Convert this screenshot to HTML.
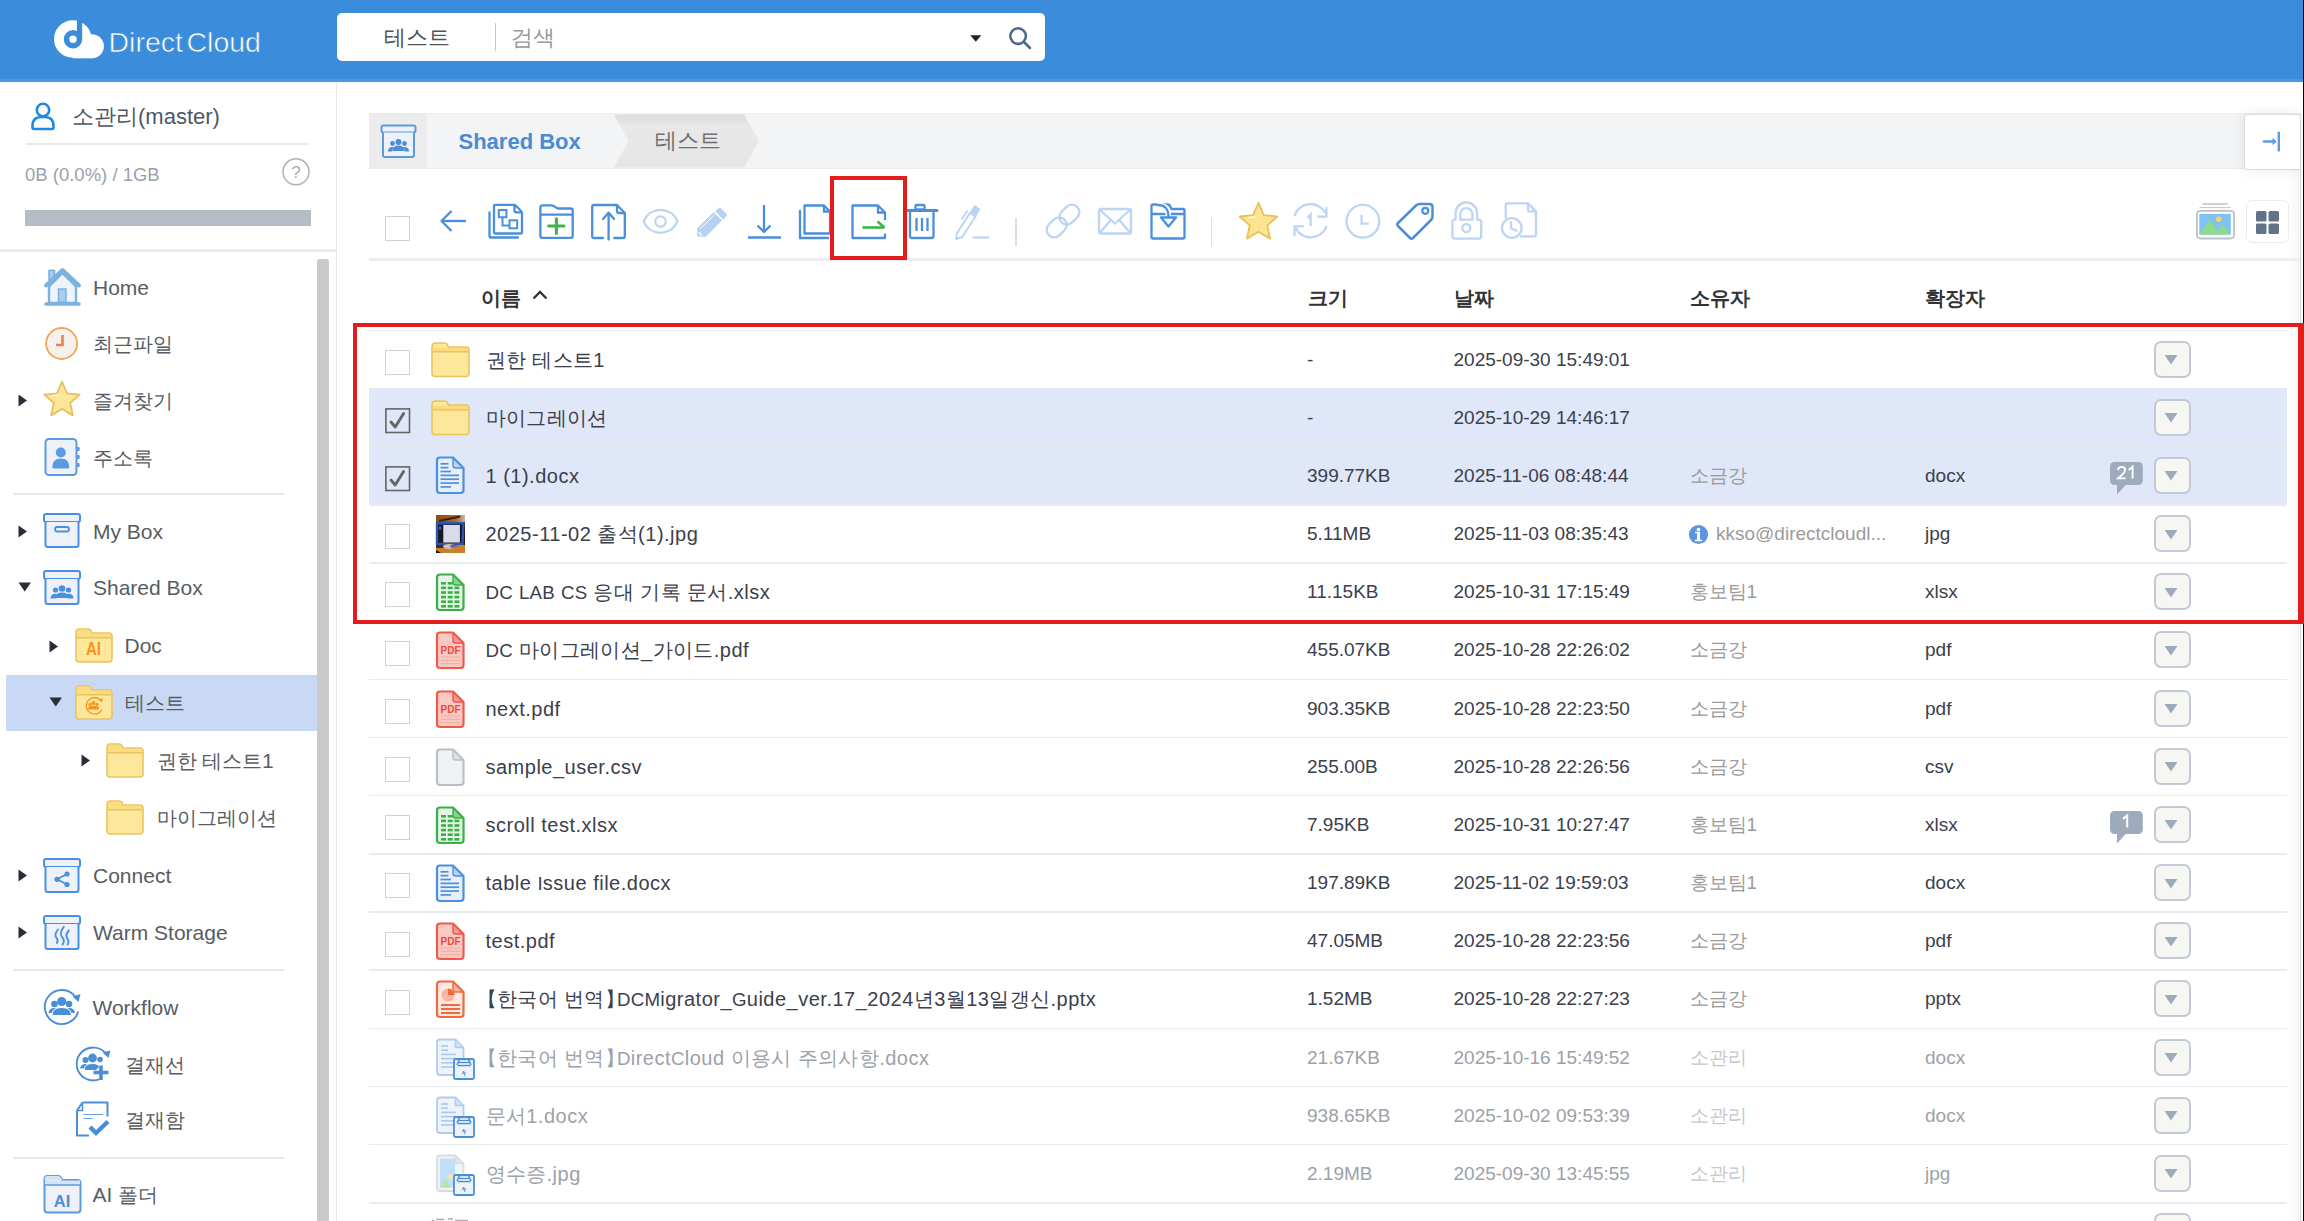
<!DOCTYPE html><html><head><meta charset="utf-8"><style>
html,body{margin:0;padding:0;}
body{width:2304px;height:1221px;overflow:hidden;position:relative;background:#fff;font-family:"Liberation Sans",sans-serif;}
.t{position:absolute;white-space:nowrap;}
svg{overflow:visible;}
.k{font-size:19.5px;letter-spacing:0.35px;}
.u{font-size:18.7px;letter-spacing:0.2px;}
.k2{font-size:20px;}
</style></head><body>
<div style="position:absolute;left:0px;top:0px;width:2304px;height:79px;background:#3b8ddb"></div>
<div style="position:absolute;left:0px;top:79px;width:2304px;height:3px;background:#4b98e0"></div>
<svg style="position:absolute;left:50px;top:14px;" width="60" height="50" viewBox="0 0 60 50" fill="none">
<circle cx="22.8" cy="25" r="18.8" fill="#fff"/>
<circle cx="41.9" cy="32.3" r="12" fill="#fff"/>
<rect x="22.8" y="25" width="19.1" height="19.3" fill="#fff"/>
<circle cx="23" cy="25.2" r="6.45" stroke="#3b8ddb" stroke-width="5.5"/>
<rect x="26.9" y="0" width="5.3" height="25.2" fill="#3b8ddb"/>
</svg>
<div class="t" style="left:108.5px;top:22.50px;font-size:28.5px;line-height:39px;color:#fff;font-weight:normal;-webkit-text-stroke:0.6px #3b8ddb;">Direct</div>
<div class="t" style="left:186.5px;top:22.50px;font-size:28.5px;line-height:39px;color:#fff;font-weight:normal;-webkit-text-stroke:0.6px #3b8ddb;">Cloud</div>
<div style="position:absolute;left:337px;top:13px;width:708px;height:47.5px;background:#fff;border-radius:5px"></div>
<div class="t" style="left:384px;top:22.50px;font-size:22px;line-height:30px;color:#555;font-weight:normal;">테스트</div>
<div style="position:absolute;left:494.5px;top:23px;width:1.5px;height:28px;background:#c8c8c8"></div>
<div class="t" style="left:511px;top:22.50px;font-size:22px;line-height:30px;color:#999;font-weight:normal;">검색</div>
<svg style="position:absolute;left:968px;top:33px;" width="16" height="10" viewBox="0 0 16 10" fill="none"><path d="M2.3 2.2 H13.3 L7.8 8.7 Z" fill="#222"/></svg>
<svg style="position:absolute;left:1005px;top:23px;" width="30" height="30" viewBox="0 0 30 30" fill="none"><circle cx="13.1" cy="13.1" r="7.8" stroke="#4d6a8c" stroke-width="2.6"/><path d="M19 19 L25 25" stroke="#4d6a8c" stroke-width="2.6" stroke-linecap="round"/></svg>
<div style="position:absolute;left:336px;top:82px;width:1px;height:1139px;background:#e6e8eb"></div>
<svg style="position:absolute;left:28px;top:100px;" width="30" height="34" viewBox="0 0 30 34" fill="none"><circle cx="15" cy="10" r="6.2" stroke="#1e88e5" stroke-width="2.6"/><path d="M4.5 26 Q4.5 17 13 17 H17 Q25.5 17 25.5 26 V27.5 Q25.5 29 24 29 H6 Q4.5 29 4.5 27.5 Z" stroke="#1e88e5" stroke-width="2.6" stroke-linejoin="round"/></svg>
<div class="t" style="left:72px;top:101.50px;font-size:22px;line-height:30px;color:#4a5866;font-weight:normal;">소관리(master)</div>
<div style="position:absolute;left:26px;top:143px;width:283px;height:2px;background:#e9e9e9"></div>
<div class="t" style="left:25px;top:161.50px;font-size:18.5px;line-height:25px;color:#9aa1aa;font-weight:normal;">0B (0.0%) / 1GB</div>
<svg style="position:absolute;left:282px;top:158px;" width="29" height="29" viewBox="0 0 29 29" fill="none"><circle cx="14" cy="13.8" r="13" stroke="#b0b0b0" stroke-width="1.5"/><text x="14" y="20" text-anchor="middle" font-family="Liberation Sans" font-size="17" fill="#aaa">?</text></svg>
<div style="position:absolute;left:24.5px;top:210px;width:286px;height:15.5px;background:#b4bcc5"></div>
<div style="position:absolute;left:0px;top:249px;width:336px;height:3px;background:#eaecef"></div>
<div style="position:absolute;left:317.3px;top:258.8px;width:11.5px;height:963px;background:#cacaca;border-radius:3px 3px 0 0"></div>
<svg style="position:absolute;left:43px;top:267px;" width="40" height="40" viewBox="0 0 40 40" fill="none"><path d="M7.5 3.5 H11.5 V10" fill="#a8cdf0" stroke="#7ab3e0" stroke-width="1.6"/><rect x="6" y="3.5" width="5" height="9" fill="#a8cdf0" stroke="#7ab3e0" stroke-width="1.6"/>
<path d="M6 19.5 L19.5 6 L33 19.5 V36 H6 Z" fill="#eef4fa" stroke="#7ab3e0" stroke-width="2.4" stroke-linejoin="round"/>
<path d="M3 18.5 L19.5 3 L36 18.5" stroke="#7ab3e0" stroke-width="4" stroke-linecap="round" stroke-linejoin="round"/>
<rect x="15.5" y="22" width="7.5" height="13" fill="#a8cdf0" stroke="#7ab3e0" stroke-width="1.5"/>
<path d="M3 37 H36" stroke="#7ab3e0" stroke-width="3.6" stroke-linecap="round"/></svg>
<div class="t" style="left:93px;top:272.80px;font-size:21px;line-height:29px;color:#585c62;font-weight:normal;">Home</div>
<svg style="position:absolute;left:45px;top:327px;" width="34" height="34" viewBox="0 0 34 34" fill="none"><circle cx="16.6" cy="16.5" r="15.5" fill="#f7f1ee" stroke="#f1a85c" stroke-width="1.8"/><path d="M17.5 8 V18 H11" stroke="#e8805c" stroke-width="2.6"/></svg>
<div class="t" style="left:93px;top:329.00px;font-size:21px;line-height:29px;color:#585c62;font-weight:normal;"><span class="k2">최근파일</span></div>
<svg style="position:absolute;left:18px;top:393.5px;" width="10" height="13" viewBox="0 0 10 13" fill="none"><path d="M0.5 0.5 L9 6.5 L0.5 12.5 Z" fill="#2b2e3a"/></svg>
<svg style="position:absolute;left:43px;top:380px;" width="38" height="38" viewBox="0 0 38 38" fill="none"><path d="M19.00 1.70 L24.05 13.34 L36.69 14.55 L27.18 22.96 L29.93 35.35 L19.00 28.90 L8.07 35.35 L10.82 22.96 L1.31 14.55 L13.95 13.34 Z" fill="#fde69a" stroke="#e8c062" stroke-width="1.8" stroke-linejoin="round"/><path d="M10 15.5 L16 15" stroke="#fff6d0" stroke-width="1.2" stroke-linecap="round"/></svg>
<div class="t" style="left:93px;top:385.50px;font-size:21px;line-height:29px;color:#585c62;font-weight:normal;"><span class="k2">즐겨찾기</span></div>
<svg style="position:absolute;left:44px;top:438px;" width="38" height="39" viewBox="0 0 38 39" fill="none"><rect x="1.5" y="1" width="31" height="36" rx="3.5" fill="#eef2f8" stroke="#5c9ae0" stroke-width="2"/>
<g fill="#5c9ae0"><circle cx="16.8" cy="14.5" r="5"/><path d="M8.3 29 Q8.3 20.5 16.8 20.5 Q25.3 20.5 25.3 29 Q25.3 30.5 23.5 30.5 H10.1 Q8.3 30.5 8.3 29 Z"/>
<rect x="32.5" y="9" width="3.2" height="4" rx="1"/><rect x="32.5" y="17" width="3.2" height="4" rx="1"/><rect x="32.5" y="25" width="3.2" height="4" rx="1"/></g></svg>
<div class="t" style="left:93px;top:442.50px;font-size:21px;line-height:29px;color:#585c62;font-weight:normal;"><span class="k2">주소록</span></div>
<div style="position:absolute;left:13px;top:493px;width:271px;height:2px;background:#e2e8ef"></div>
<svg style="position:absolute;left:18px;top:524.5px;" width="10" height="13" viewBox="0 0 10 13" fill="none"><path d="M0.5 0.5 L9 6.5 L0.5 12.5 Z" fill="#2b2e3a"/></svg>
<svg style="position:absolute;left:43px;top:513px;" width="38" height="35" viewBox="0 0 38 35" fill="none"><rect x="1" y="1" width="36" height="8" rx="2" fill="#eef2f8" stroke="#4a90e2" stroke-width="2"/>
<path d="M2.5 9 V32 Q2.5 34 4.5 34 H33.5 Q35.5 34 35.5 32 V9" fill="#eef2f8" stroke="#4a90e2" stroke-width="2"/><rect x="12" y="14" width="14" height="4.5" rx="2.2" stroke="#4a90e2" stroke-width="1.8"/></svg>
<div class="t" style="left:93px;top:516.50px;font-size:21px;line-height:29px;color:#585c62;font-weight:normal;">My Box</div>
<svg style="position:absolute;left:18px;top:582px;" width="14" height="10" viewBox="0 0 14 10" fill="none"><path d="M0.5 0.5 H13 L6.75 9.5 Z" fill="#2b2e3a"/></svg>
<svg style="position:absolute;left:43px;top:570px;" width="38" height="35" viewBox="0 0 38 35" fill="none"><rect x="1" y="1" width="36" height="8" rx="2" fill="#eef2f8" stroke="#4a90e2" stroke-width="2"/>
<path d="M2.5 9 V32 Q2.5 34 4.5 34 H33.5 Q35.5 34 35.5 32 V9" fill="#eef2f8" stroke="#4a90e2" stroke-width="2"/><g fill="#4a90e2"><circle cx="19" cy="18.5" r="3.3"/><path d="M12.5 28 Q12.5 22.5 19 22.5 Q25.5 22.5 25.5 28 Z"/><circle cx="12.5" cy="20" r="2.6"/><path d="M7.5 28.5 Q7.5 23.8 12.5 23.8 Q14 23.8 14.5 24.5 Q12.8 26 12.8 28.5 Z"/><circle cx="25.5" cy="20" r="2.6"/><path d="M30.5 28.5 Q30.5 23.8 25.5 23.8 Q24 23.8 23.5 24.5 Q25.2 26 25.2 28.5 Z"/></g></svg>
<div class="t" style="left:93px;top:573.00px;font-size:21px;line-height:29px;color:#585c62;font-weight:normal;">Shared Box</div>
<svg style="position:absolute;left:49px;top:639.5px;" width="10" height="13" viewBox="0 0 10 13" fill="none"><path d="M0.5 0.5 L9 6.5 L0.5 12.5 Z" fill="#2b2e3a"/></svg>
<svg style="position:absolute;left:75px;top:628px;" width="38" height="35" viewBox="0 0 38 35" fill="none"><path d="M1 5 Q1 1 4 1 H13 Q16 1 16.5 4 L17 5 H34 Q37 5 37 8 V31 Q37 34 34 34 H4 Q1 34 1 31 Z" fill="#fde79a" stroke="#e8c462" stroke-width="1.6"/>
<path d="M1.8 5 Q1.8 1.8 4 1.8 H13 Q15.5 1.8 16 4.5 L16.5 5.8 H34 Q36.2 5.8 36.2 8 V9.2 H1.8 Z" fill="#fbdc7e"/>
<path d="M1.5 9.8 H36.5" stroke="#e8c462" stroke-width="1.6"/><text x="11" y="27.3" font-family="Liberation Sans" font-weight="bold" font-size="18.5" fill="#f7931e" textLength="15" lengthAdjust="spacingAndGlyphs">AI</text></svg>
<div class="t" style="left:124.5px;top:630.50px;font-size:21px;line-height:29px;color:#585c62;font-weight:normal;">Doc</div>
<div style="position:absolute;left:5.5px;top:675.3px;width:311.5px;height:55.8px;background:#c9d9f5"></div>
<svg style="position:absolute;left:49px;top:696.5px;" width="14" height="10" viewBox="0 0 14 10" fill="none"><path d="M0.5 0.5 H13 L6.75 9.5 Z" fill="#2b2e3a"/></svg>
<svg style="position:absolute;left:75px;top:685px;" width="38" height="35" viewBox="0 0 38 35" fill="none"><path d="M1 5 Q1 1 4 1 H13 Q16 1 16.5 4 L17 5 H34 Q37 5 37 8 V31 Q37 34 34 34 H4 Q1 34 1 31 Z" fill="#fde79a" stroke="#e8c462" stroke-width="1.6"/>
<path d="M1.8 5 Q1.8 1.8 4 1.8 H13 Q15.5 1.8 16 4.5 L16.5 5.8 H34 Q36.2 5.8 36.2 8 V9.2 H1.8 Z" fill="#fbdc7e"/>
<path d="M1.5 9.8 H36.5" stroke="#e8c462" stroke-width="1.6"/><path d="M25.5 15 A8.3 8.3 0 1 0 27 24.5" stroke="#f7931e" stroke-width="1.3"/><path d="M23.5 14.5 L27.8 13.2 L26.8 17.5 Z" fill="#f7931e"/><g fill="#f7931e"><circle cx="18.5" cy="18" r="2.1"/><circle cx="15" cy="19.3" r="1.6"/><circle cx="22" cy="19.3" r="1.6"/><path d="M13 24.5 Q13 21 15.5 21 H21.5 Q24 21 24 24.5 Z"/></g></svg>
<div class="t" style="left:125px;top:688.00px;font-size:21px;line-height:29px;color:#585c62;font-weight:normal;"><span class="k2">테스트</span></div>
<svg style="position:absolute;left:81px;top:754.0px;" width="10" height="13" viewBox="0 0 10 13" fill="none"><path d="M0.5 0.5 L9 6.5 L0.5 12.5 Z" fill="#2b2e3a"/></svg>
<svg style="position:absolute;left:106px;top:742.5px;" width="38" height="35" viewBox="0 0 38 35" fill="none"><path d="M1 5 Q1 1 4 1 H13 Q16 1 16.5 4 L17 5 H34 Q37 5 37 8 V31 Q37 34 34 34 H4 Q1 34 1 31 Z" fill="#fde79a" stroke="#e8c462" stroke-width="1.6"/>
<path d="M1.8 5 Q1.8 1.8 4 1.8 H13 Q15.5 1.8 16 4.5 L16.5 5.8 H34 Q36.2 5.8 36.2 8 V9.2 H1.8 Z" fill="#fbdc7e"/>
<path d="M1.5 9.8 H36.5" stroke="#e8c462" stroke-width="1.6"/></svg>
<div class="t" style="left:156.5px;top:745.50px;font-size:21px;line-height:29px;color:#585c62;font-weight:normal;"><span class="k2">권한 테스트</span>1</div>
<svg style="position:absolute;left:106px;top:800px;" width="38" height="35" viewBox="0 0 38 35" fill="none"><path d="M1 5 Q1 1 4 1 H13 Q16 1 16.5 4 L17 5 H34 Q37 5 37 8 V31 Q37 34 34 34 H4 Q1 34 1 31 Z" fill="#fde79a" stroke="#e8c462" stroke-width="1.6"/>
<path d="M1.8 5 Q1.8 1.8 4 1.8 H13 Q15.5 1.8 16 4.5 L16.5 5.8 H34 Q36.2 5.8 36.2 8 V9.2 H1.8 Z" fill="#fbdc7e"/>
<path d="M1.5 9.8 H36.5" stroke="#e8c462" stroke-width="1.6"/></svg>
<div class="t" style="left:156.5px;top:802.50px;font-size:21px;line-height:29px;color:#585c62;font-weight:normal;"><span class="k2">마이그레이션</span></div>
<svg style="position:absolute;left:18px;top:868.5px;" width="10" height="13" viewBox="0 0 10 13" fill="none"><path d="M0.5 0.5 L9 6.5 L0.5 12.5 Z" fill="#2b2e3a"/></svg>
<svg style="position:absolute;left:43px;top:858px;" width="38" height="35" viewBox="0 0 38 35" fill="none"><rect x="1" y="1" width="36" height="8" rx="2" fill="#eef2f8" stroke="#4a90e2" stroke-width="2"/>
<path d="M2.5 9 V32 Q2.5 34 4.5 34 H33.5 Q35.5 34 35.5 32 V9" fill="#eef2f8" stroke="#4a90e2" stroke-width="2"/><g fill="#4a90e2"><circle cx="24" cy="16" r="2.6"/><circle cx="14" cy="21.3" r="2.6"/><circle cx="24" cy="26.5" r="2.6"/></g><path d="M24 16 L14 21.3 L24 26.5" stroke="#4a90e2" stroke-width="1.8"/></svg>
<div class="t" style="left:93px;top:860.50px;font-size:21px;line-height:29px;color:#585c62;font-weight:normal;">Connect</div>
<svg style="position:absolute;left:18px;top:925.5px;" width="10" height="13" viewBox="0 0 10 13" fill="none"><path d="M0.5 0.5 L9 6.5 L0.5 12.5 Z" fill="#2b2e3a"/></svg>
<svg style="position:absolute;left:43px;top:915px;" width="38" height="35" viewBox="0 0 38 35" fill="none"><rect x="1" y="1" width="36" height="8" rx="2" fill="#eef2f8" stroke="#4a90e2" stroke-width="2"/>
<path d="M2.5 9 V32 Q2.5 34 4.5 34 H33.5 Q35.5 34 35.5 32 V9" fill="#eef2f8" stroke="#4a90e2" stroke-width="2"/><path d="M15 14.5 Q10.8 19.5 13.6 23 Q15.6 25.5 13.9 28 M20.8 11.8 Q15.8 17.8 19.2 22.2 Q22.2 25.8 19.6 29.6 M25.8 15.5 Q21.8 20 24.3 23.5 Q26.6 27 24.6 29.6" stroke="#4a90e2" stroke-width="1.9" stroke-linecap="round"/></svg>
<div class="t" style="left:93px;top:917.50px;font-size:21px;line-height:29px;color:#585c62;font-weight:normal;">Warm Storage</div>
<div style="position:absolute;left:13px;top:969px;width:271px;height:2px;background:#e2e8ef"></div>
<svg style="position:absolute;left:43px;top:988px;" width="42" height="40" viewBox="0 0 42 40" fill="none"><path d="M32.5 9 A17 17 0 1 0 35.2 23.5" stroke="#4a8ed8" stroke-width="1.9"/><path d="M29.5 8.5 L37.5 6 L35.5 14 Z" fill="#4a8ed8"/>
<g fill="#4a8ed8"><circle cx="11.5" cy="16" r="3.3"/><path d="M5.5 25 Q6 20 11.5 20 Q15 20 16 22 L14 25 Z"/><circle cx="26" cy="16" r="3.3"/><path d="M32 25 Q31.5 20 26 20 Q22.5 20 21.5 22 L23.5 25 Z"/>
<circle cx="18.7" cy="13.5" r="4.6"/><path d="M9 27.5 Q9 19.5 18.7 19.5 Q28.4 19.5 28.4 27.5 Z" stroke="#fff" stroke-width="1"/></g></svg>
<div class="t" style="left:92.5px;top:992.50px;font-size:21px;line-height:29px;color:#585c62;font-weight:normal;">Workflow</div>
<svg style="position:absolute;left:75px;top:1045px;" width="40" height="40" viewBox="0 0 40 40" fill="none"><path d="M30.5 8 A16.5 16.5 0 1 0 25 34" stroke="#4a8ed8" stroke-width="1.9"/><path d="M27.5 7.5 L35.5 5.5 L33.5 13 Z" fill="#4a8ed8"/>
<g fill="#4a8ed8"><circle cx="10.5" cy="15" r="3"/><path d="M5 23.5 Q5.5 19 10.5 19 L13 19.5 L11.5 23.5 Z"/><circle cx="25" cy="14.5" r="2.8"/>
<circle cx="17.5" cy="13" r="4.4"/><path d="M9 25.5 Q9 18.5 17.5 18.5 Q23.5 18.5 24.5 22 L21 25.5 Z" stroke="#fff" stroke-width="1"/></g>
<path d="M26 20.5 V35 M18.5 27.5 H33.5" stroke="#4a8ed8" stroke-width="3.6"/></svg>
<div class="t" style="left:125.4px;top:1049.50px;font-size:21px;line-height:29px;color:#585c62;font-weight:normal;"><span class="k2">결재선</span></div>
<svg style="position:absolute;left:76px;top:1101px;" width="36" height="37" viewBox="0 0 36 37" fill="none"><path d="M6.5 1.5 H31.5 V15.5 M1 9.5 L6.5 1.5 M1 9.5 V34.5 H13" stroke="#4a8ed8" stroke-width="2" stroke-linejoin="round"/>
<path d="M1.5 9.5 H6.5 V2" stroke="#4a8ed8" stroke-width="1.5"/>
<path d="M7.5 13.5 H27 M7.5 17.5 H16.5" stroke="#6a9fdf" stroke-width="1.1"/>
<path d="M14 26 L20 32 L32 20.5" stroke="#4a8ed8" stroke-width="4.4"/></svg>
<div class="t" style="left:125.4px;top:1105.00px;font-size:21px;line-height:29px;color:#585c62;font-weight:normal;"><span class="k2">결재함</span></div>
<div style="position:absolute;left:13px;top:1156.5px;width:271px;height:2px;background:#e2e8ef"></div>
<svg style="position:absolute;left:43px;top:1175px;" width="39" height="39" viewBox="0 0 39 39" fill="none"><path d="M1.5 4 Q1.5 1 4.5 1 H15 Q17.5 1 18.5 3.5 L19 5 H34.5 Q37.5 5 37.5 8 V34.5 Q37.5 37.5 34.5 37.5 H4.5 Q1.5 37.5 1.5 34.5 Z" fill="#eef2f8" stroke="#5c9ae0" stroke-width="2"/>
<path d="M1.5 5 H19 L18.5 3.5 Q17.5 1 15 1 H4.5 Q1.5 1 1.5 4 Z M2 5.5 H37 V10 H2 Z" fill="#d5e3f6"/>
<path d="M1.5 10 H37.5" stroke="#5c9ae0" stroke-width="1.6"/>
<text x="19" y="32" text-anchor="middle" font-family="Liberation Sans" font-weight="bold" font-size="16.5" fill="#4a8ed8">AI</text></svg>
<div class="t" style="left:92.5px;top:1179.50px;font-size:21px;line-height:29px;color:#585c62;font-weight:normal;">AI <span class="k2">폴더</span></div>
<div style="position:absolute;left:369px;top:113px;width:1931px;height:56px;background:#f3f4f6;border-top:1px solid #eeeff1;border-bottom:1px solid #ebecee;box-sizing:border-box"></div>
<div style="position:absolute;left:369px;top:113px;width:58px;height:56px;background:#ececed"></div>
<svg style="position:absolute;left:380px;top:124px;" width="38" height="35" viewBox="0 0 38 35" fill="none"><rect x="1.5" y="1.5" width="34" height="7" rx="2" fill="#eef2f8" stroke="#5c9ae0" stroke-width="2"/>
<path d="M3 8.5 V31 Q3 33 5 33 H32 Q34 33 34 31 V8.5" fill="#eef2f8" stroke="#5c9ae0" stroke-width="2"/>
<g fill="#4a8ed8"><circle cx="18.5" cy="18" r="3"/><path d="M12.5 27 Q12.5 21.5 18.5 21.5 Q24.5 21.5 24.5 27 Z"/><circle cx="12.5" cy="19.5" r="2.4"/><path d="M8 27.5 Q8 23 12.5 23 L13.8 23.4 Q12.2 25 12.2 27.5 Z"/><circle cx="24.5" cy="19.5" r="2.4"/><path d="M29 27.5 Q29 23 24.5 23 L23.2 23.4 Q24.8 25 24.8 27.5 Z"/></g></svg>
<div class="t" style="left:458.5px;top:126.50px;font-size:22px;line-height:30px;color:#4a8bd4;font-weight:bold;">Shared Box</div>
<svg style="position:absolute;left:612px;top:114px;" width="150" height="54" viewBox="0 0 150 54" fill="none"><defs><linearGradient id="bg1" x1="0" y1="0" x2="0" y2="1"><stop offset="0" stop-color="#dcdcdc"/><stop offset="0.25" stop-color="#e8e8e8"/><stop offset="1" stop-color="#e6e6e6"/></linearGradient></defs><path d="M2 0.5 H132 L147 27 L132 53.5 H2 L16.5 27 Z" fill="url(#bg1)"/></svg>
<div class="t" style="left:655px;top:126.20px;font-size:22px;line-height:30px;color:#707070;font-weight:normal;">테스트</div>
<div style="position:absolute;left:2244px;top:114px;width:56px;height:55.5px;background:#fff;border:1.2px solid #dcdcdc;border-right:none;border-radius:4px 0 0 4px;box-sizing:border-box;box-shadow:0 0 14px rgba(0,0,0,0.09)"></div>
<svg style="position:absolute;left:2262px;top:131px;" width="20" height="22" viewBox="0 0 20 22" fill="none"><path d="M1.8 10.5 H13" stroke="#5a9de6" stroke-width="2.3" stroke-linecap="round"/><path d="M10.5 6.8 L14.6 10.5 L10.5 14.2 Z" fill="#5a9de6"/><path d="M16.8 1.6 V19.4" stroke="#5a9de6" stroke-width="2.4" stroke-linecap="round"/></svg>
<div style="position:absolute;left:2287px;top:169px;width:13px;height:1052px;background:linear-gradient(to right,rgba(0,0,0,0),rgba(0,0,0,0.035))"></div>
<div style="position:absolute;left:2299.5px;top:114px;width:1.6px;height:1107px;background:#d6d6d6"></div>
<div style="position:absolute;left:2303px;top:0px;width:1px;height:1221px;background:#000"></div>
<div style="position:absolute;left:385px;top:216px;width:25px;height:25px;border:1.5px solid #d2d2d2;box-sizing:border-box;background:#fff"></div>
<svg style="position:absolute;left:438px;top:208px;" width="30" height="26" viewBox="0 0 30 26" fill="none"><path d="M4 13 H28" stroke="#4a8fdc" stroke-width="2.3"/><path d="M13.5 3 L3.5 13 L13.5 23" stroke="#4a8fdc" stroke-width="2.3" stroke-linejoin="round"/></svg>
<svg style="position:absolute;left:486px;top:203px;" width="40" height="38" viewBox="0 0 40 38" fill="none"><path d="M3.5 9.5 V33 Q3.5 34.5 5 34.5 H32" stroke="#4a8fdc" stroke-width="2.3" stroke-linejoin="round" stroke-linecap="round"/>
<path d="M9.5 1.8 H27.5 Q29 1.8 30 2.8 L35 8 Q36 9 36 10.5 V29 Q36 30.5 34.5 30.5 H9.5 Q8 30.5 8 29 V3.3 Q8 1.8 9.5 1.8 Z" stroke="#4a8fdc" stroke-width="2.3" stroke-linejoin="round" stroke-linecap="round"/><path d="M28.5 2.5 V7.5 Q28.5 9.3 30.3 9.3 H35.5" stroke="#4a8fdc" stroke-width="2.3" stroke-linejoin="round" stroke-linecap="round"/>
<rect x="12.8" y="7" width="7.6" height="7.2" stroke="#4a8fdc" stroke-width="2"/><rect x="23.5" y="17.3" width="7.7" height="8" stroke="#4a8fdc" stroke-width="2"/><path d="M16.5 14.2 V22.5 H23.5" stroke="#4a8fdc" stroke-width="2"/></svg>
<svg style="position:absolute;left:537px;top:202px;" width="40" height="40" viewBox="0 0 40 40" fill="none"><path d="M3.4 34 V5.5 Q3.4 3.4 5.5 3.4 H14.5 Q16.5 3.4 18 4.8 Q19.5 6.5 21.5 6.5 H33.5 Q35.7 6.5 35.7 8.7 V34 Q35.7 35.8 33.9 35.8 H5.2 Q3.4 35.8 3.4 34 Z" stroke="#4a8fdc" stroke-width="2.3" stroke-linejoin="round" stroke-linecap="round"/>
<path d="M3.4 12.7 H35.7" stroke="#4a8fdc" stroke-width="2.3"/>
<path d="M19.4 16.8 V31.4 M11.6 24 H27" stroke="#3db54a" stroke-width="3.1" stroke-linecap="round"/></svg>
<svg style="position:absolute;left:589px;top:202px;" width="40" height="42" viewBox="0 0 40 42" fill="none"><path d="M14 36 H5 Q3.2 36 3.2 34.2 V4.8 Q3.2 3 5 3 H28 L35.8 11 V34.2 Q35.8 36 34 36 H25.2" stroke="#4a8fdc" stroke-width="2.3" stroke-linejoin="round" stroke-linecap="round"/><path d="M28 3.5 V9 Q28 11 30 11 H35.5" stroke="#4a8fdc" stroke-width="2.3" stroke-linejoin="round" stroke-linecap="round"/>
<path d="M19.6 37.5 V11" stroke="#4a8fdc" stroke-width="2.3" stroke-linecap="round"/><path d="M14 17 L19.6 10.8 L25.1 17" stroke="#4a8fdc" stroke-width="2.3" stroke-linejoin="round" stroke-linecap="round"/></svg>
<svg style="position:absolute;left:641px;top:207px;" width="40" height="30" viewBox="0 0 40 30" fill="none"><path d="M2.7 14.3 C9 -1 30 -1 36.5 14.3 C30 29.6 9 29.6 2.7 14.3 Z" stroke="#bcd5f2" stroke-width="2.2" stroke-linejoin="round"/><circle cx="19.5" cy="14.5" r="5.2" stroke="#bcd5f2" stroke-width="2.2"/></svg>
<svg style="position:absolute;left:695px;top:205px;" width="38" height="36" viewBox="0 0 38 36" fill="none"><path d="M2.5 23.3 L18.5 7.6 L26.6 15.5 L11 31.2 L2.5 31.2 Z" fill="#b6d2f0" stroke="#b6d2f0" stroke-width="0.8" stroke-linejoin="round"/><path d="M20.2 6.2 L23.4 3.2 Q24.6 2 25.8 3.2 L31.6 8.9 Q32.8 10.1 31.6 11.3 L28.2 14.6 Z" fill="#b6d2f0"/><path d="M5.3 23.8 L18.8 10.3" stroke="#fff" stroke-width="0.9"/><path d="M3.6 27.2 L6.8 30.2" stroke="#fff" stroke-width="1.3"/></svg>
<svg style="position:absolute;left:745px;top:202px;" width="40" height="40" viewBox="0 0 40 40" fill="none"><path d="M19 3 V30" stroke="#4a8fdc" stroke-width="2.3"/><path d="M12.5 23.5 L19 30 L25.5 23.5" stroke="#4a8fdc" stroke-width="2.3" stroke-linejoin="round"/><path d="M3 35.5 H36" stroke="#4a8fdc" stroke-width="2.6"/></svg>
<svg style="position:absolute;left:797px;top:202px;" width="36" height="40" viewBox="0 0 36 40" fill="none"><path d="M3 8 V36 H32" stroke="#4a8fdc" stroke-width="2.3"/><path d="M7.5 3.5 H27 L33 9.5 V31.5 H7.5 Z" stroke="#4a8fdc" stroke-width="2.3" stroke-linejoin="round"/><path d="M27 3.5 V9.5 H33" stroke="#4a8fdc" stroke-width="2.3"/></svg>
<svg style="position:absolute;left:849px;top:202px;" width="40" height="40" viewBox="0 0 40 40" fill="none"><path d="M36 31.5 V36 H3.5 V3.5 H29 L36 10.5 V18" stroke="#4a8fdc" stroke-width="2.3" stroke-linejoin="round"/><path d="M29 3.5 V10.5 H36" stroke="#4a8fdc" stroke-width="2.3"/>
<path d="M13.5 25.5 H35.5" stroke="#3db54a" stroke-width="2.6"/><path d="M28.5 19.5 L35.5 25.5" stroke="#3db54a" stroke-width="2.6"/></svg>
<svg style="position:absolute;left:905px;top:202px;" width="36" height="40" viewBox="0 0 36 40" fill="none"><path d="M2.5 8.5 H32" stroke="#4a8fdc" stroke-width="3" stroke-linecap="round"/><rect x="10.5" y="3" width="9" height="4.5" rx="1" stroke="#4a8fdc" stroke-width="2.3"/>
<path d="M5 10 V34 Q5 36 7 36 H26.5 Q28.5 36 28.5 34 V10" stroke="#4a8fdc" stroke-width="2.3"/><path d="M11.5 16 V29 M17 16 V29 M22.5 16 V29" stroke="#4a8fdc" stroke-width="2.3"/></svg>
<svg style="position:absolute;left:953px;top:202px;" width="40" height="40" viewBox="0 0 40 40" fill="none"><path d="M3 37 L3.8 31.5 L17 11 L22.5 14.5 L9.3 35 Z" stroke="#bcd5f2" stroke-width="2" stroke-linejoin="round"/><path d="M17.5 10.5 L21.5 4 L26.5 7.5 L22.5 14" fill="#bcd5f2" stroke="#bcd5f2" stroke-width="1.6" stroke-linejoin="round"/><path d="M14.5 8.5 L8.5 17.5" stroke="#bcd5f2" stroke-width="1.8"/>
<path d="M19.5 35.5 H36" stroke="#bcd5f2" stroke-width="2.2"/></svg>
<div style="position:absolute;left:1015px;top:218px;width:1.5px;height:28px;background:#dedede"></div>
<svg style="position:absolute;left:1044px;top:202px;" width="40" height="40" viewBox="0 0 40 40" fill="none"><g transform="rotate(45 19 19)"><rect x="11.5" y="-1" width="15" height="22" rx="7.5" stroke="#bcd5f2" stroke-width="2.3"/><rect x="11.5" y="17" width="15" height="22" rx="7.5" stroke="#bcd5f2" stroke-width="2.3"/></g></svg>
<svg style="position:absolute;left:1096px;top:206px;" width="38" height="31" viewBox="0 0 38 31" fill="none"><rect x="3" y="3" width="32" height="24.5" rx="1.5" stroke="#bcd5f2" stroke-width="2.3"/><path d="M3.5 3.5 L19 17.5 L34.5 3.5 M3.5 27 L14.5 14.5 M34.5 27 L23.5 14.5" stroke="#bcd5f2" stroke-width="2.3"/></svg>
<svg style="position:absolute;left:1148px;top:202px;" width="40" height="40" viewBox="0 0 40 40" fill="none"><path d="M3.5 35 V4 Q3.5 2.5 5 2.5 H19.5 Q21.5 2.5 22.5 5 L23.5 7 H35 Q36.5 7 36.5 8.5 V35 Q36.5 36.5 35 36.5 H5 Q3.5 36.5 3.5 35 Z" stroke="#4a8fdc" stroke-width="2.3" stroke-linejoin="round"/><path d="M3.5 12 H36.5" stroke="#4a8fdc" stroke-width="2.3"/>
<path d="M9 3 Q20.5 2.5 20.5 15" stroke="#fff" stroke-width="5.5"/><path d="M9 3 Q20.5 2.5 20.5 15" stroke="#4a8fdc" stroke-width="2.3"/>
<path d="M13 15.5 H28 L20.5 24.5 Z" fill="#fff" stroke="#4a8fdc" stroke-width="2.3" stroke-linejoin="round"/></svg>
<div style="position:absolute;left:1210.5px;top:218px;width:1.5px;height:28px;background:#dedede"></div>
<svg style="position:absolute;left:1237px;top:200px;" width="44" height="44" viewBox="0 0 44 44" fill="none"><path d="M21.50 2.80 L26.91 15.16 L40.33 16.48 L30.25 25.44 L33.14 38.62 L21.50 31.80 L9.86 38.62 L12.75 25.44 L2.67 16.48 L16.09 15.16 Z" fill="#fde48f" stroke="#e9c05c" stroke-width="1.8" stroke-linejoin="round"/><path d="M11.5 17.5 L18 17" stroke="#fff6d0" stroke-width="1.3" stroke-linecap="round"/></svg>
<svg style="position:absolute;left:1292px;top:202px;" width="40" height="40" viewBox="0 0 40 40" fill="none"><path d="M2.5 14.2 A16.7 16.7 0 0 1 33.3 10.8" stroke="#bcd5f2" stroke-width="2.3"/><path d="M34.6 23.8 A16.7 16.7 0 0 1 3.4 25.5" stroke="#bcd5f2" stroke-width="2.3"/>
<path d="M25.5 14.7 H34.4 V5.3" stroke="#bcd5f2" stroke-width="2.3"/><path d="M2.5 34.2 V24.4 H11.8" stroke="#bcd5f2" stroke-width="2.3"/><path d="M15.5 16 L18.6 12.5 V24.2" stroke="#bcd5f2" stroke-width="2.3"/></svg>
<svg style="position:absolute;left:1344px;top:202px;" width="38" height="38" viewBox="0 0 38 38" fill="none"><circle cx="18.9" cy="19.3" r="16.4" stroke="#bcd5f2" stroke-width="2.3"/><path d="M17.6 12.7 V21.6 H24.7" stroke="#bcd5f2" stroke-width="2.3"/></svg>
<svg style="position:absolute;left:1394px;top:200px;" width="42" height="42" viewBox="0 0 42 42" fill="none"><path d="M4 23 L22 5.5 Q23.5 4 26 4 H35.5 Q38.5 4 38.5 7 V16.5 Q38.5 18.5 37 20 L19 38 Q17.5 39.5 16 38 L4 26 Q2.5 24.5 4 23 Z" stroke="#4a8fdc" stroke-width="2.5" stroke-linejoin="round"/><circle cx="31.3" cy="10.8" r="3" stroke="#4a8fdc" stroke-width="2.2"/></svg>
<svg style="position:absolute;left:1449px;top:200px;" width="36" height="42" viewBox="0 0 36 42" fill="none"><path d="M6.6 19.6 H5.9 Q3.4 19.6 3.4 22.1 V36.1 Q3.4 38.6 5.9 38.6 H29.7 Q32.2 38.6 32.2 36.1 V22.1 Q32.2 19.6 29.7 19.6 H28.1 V13.2 A10.75 10.75 0 0 0 6.6 13.2 Z" stroke="#bcd5f2" stroke-width="2.3" stroke-linejoin="round"/><path d="M11.3 19.6 V14.2 A6.05 6.05 0 0 1 23.4 14.2 V19.6 Z" stroke="#bcd5f2" stroke-width="2.3"/><circle cx="17.4" cy="28" r="4" stroke="#bcd5f2" stroke-width="2.3"/></svg>
<svg style="position:absolute;left:1498px;top:201px;" width="42" height="42" viewBox="0 0 42 42" fill="none"><path d="M7.7 17.2 V4.4 Q7.7 2.4 9.7 2.4 H30 L38 10.4 V33.4 Q38 35.4 36 35.4 H21.9" stroke="#bcd5f2" stroke-width="2.3" stroke-linejoin="round"/><path d="M30 2.9 V8.4 Q30 10.4 32 10.4 H37.5" stroke="#bcd5f2" stroke-width="2.3"/><circle cx="13.8" cy="27" r="9.8" stroke="#bcd5f2" stroke-width="2.3"/><path d="M13.1 21.2 V27.3 L18.5 29.7" stroke="#bcd5f2" stroke-width="2.3" stroke-linecap="round"/></svg>
<svg style="position:absolute;left:2193px;top:202px;" width="44" height="40" viewBox="0 0 44 40" fill="none"><path d="M9.5 2 H34.8" stroke="#c5ccd5" stroke-width="1.7"/><path d="M6.5 5.5 H37.8" stroke="#c5ccd5" stroke-width="1.2"/>
<rect x="3.9" y="8.9" width="37.2" height="27.6" rx="3.6" fill="#fff" stroke="#b9c0ca" stroke-width="1.8"/>
<rect x="6.3" y="11.9" width="31.5" height="20.7" fill="#7ec3f4"/>
<path d="M6.3 32.6 L16.6 17.8 L24.5 29 L29.7 21.9 L37.8 32.6 Z" fill="#8fd98a"/><circle cx="25.7" cy="17.3" r="2.7" fill="#fcd561"/></svg>
<div style="position:absolute;left:2246px;top:200px;width:43px;height:43px;border:1px solid #ececec;border-radius:6px;box-sizing:border-box;background:#fff"></div>
<svg style="position:absolute;left:2255px;top:210px;" width="26" height="26" viewBox="0 0 26 26" fill="none"><g fill="#637286"><rect x="1" y="1" width="10.5" height="10.5" rx="1.5"/><rect x="13.5" y="1" width="10.5" height="10.5" rx="1.5"/><rect x="1" y="13.5" width="10.5" height="10.5" rx="1.5"/><rect x="13.5" y="13.5" width="10.5" height="10.5" rx="1.5"/></g></svg>
<div style="position:absolute;left:369px;top:258px;width:1931px;height:3px;background:#eceef2"></div>
<div style="position:absolute;left:830.3px;top:176.3px;width:76.3px;height:84px;border:4.9px solid #e31b1b;box-sizing:border-box"></div>
<div class="t" style="left:480.5px;top:283.50px;font-size:20px;line-height:28px;color:#333;font-weight:bold;">이름</div>
<svg style="position:absolute;left:531px;top:289px;" width="18" height="12" viewBox="0 0 18 12" fill="none"><path d="M2.5 9.5 L9 3 L15.5 9.5" stroke="#333" stroke-width="2.3" stroke-linejoin="miter"/></svg>
<div class="t" style="left:1307.5px;top:283.50px;font-size:20px;line-height:28px;color:#333;font-weight:bold;">크기</div>
<div class="t" style="left:1454px;top:283.50px;font-size:20px;line-height:28px;color:#333;font-weight:bold;">날짜</div>
<div class="t" style="left:1690px;top:283.50px;font-size:20px;line-height:28px;color:#333;font-weight:bold;">소유자</div>
<div class="t" style="left:1925px;top:283.50px;font-size:20px;line-height:28px;color:#333;font-weight:bold;">확장자</div>
<div style="position:absolute;left:369px;top:329.6px;width:1918px;height:1.5px;background:#e8ebef"></div>
<div style="position:absolute;left:385px;top:349.8px;width:25px;height:25px;border:1.5px solid #d2d2d2;box-sizing:border-box;background:#fff"></div>
<svg style="position:absolute;left:431px;top:341.6px;" width="40" height="36" viewBox="0 0 40 36" fill="none"><path d="M1 5 Q1 1 4.5 1 H13.5 Q16 1 16.8 3.5 L17.3 5 H35 Q38 5 38 8 V31.5 Q38 34.5 35 34.5 H4 Q1 34.5 1 31.5 Z" fill="#fde79a" stroke="#e8c462" stroke-width="1.6"/>
<path d="M1.8 6 H37.2 V9.3 H1.8 Z" fill="#fbdb7c"/><path d="M1.5 9.8 H37.5" stroke="#e8c462" stroke-width="1.5"/></svg>
<div class="t" style="left:485.5px;top:345.60px;font-size:20px;line-height:28px;color:#3b404c;font-weight:normal;letter-spacing:0.5px;"><span class="k">권한</span> <span class="k">테스트</span>1</div>
<div class="t" style="left:1307px;top:346.60px;font-size:19px;line-height:26px;color:#3b404c;font-weight:normal;">-</div>
<div class="t" style="left:1453.5px;top:346.60px;font-size:19px;line-height:26px;color:#3b404c;font-weight:normal;">2025-09-30 15:49:01</div>
<div style="position:absolute;left:2153.5px;top:340.60px;width:37px;height:37px;box-sizing:border-box;border:2px solid #c2cad6;border-radius:7px;background:#f6f7f3"></div>
<svg style="position:absolute;left:2163px;top:354.0px;" width="16" height="12" viewBox="0 0 16 12" fill="none"><path d="M1.5 1 H14.5 L8 10.5 Z" fill="#9eaabb"/></svg>
<div style="position:absolute;left:369px;top:387.77px;width:1918px;height:58.17px;background:#dfe7f8"></div>
<div style="position:absolute;left:369px;top:387.77px;width:1918px;height:1.5px;background:#e8ebef"></div>
<svg style="position:absolute;left:385px;top:407.97px;" width="26" height="26" viewBox="0 0 26 26" fill="none"><rect x="0.9" y="0.9" width="23.6" height="23.6" stroke="#666" stroke-width="1.6" fill="none"/><path d="M6 14 L10.2 19 L18.6 5.6" stroke="#666" stroke-width="2.9" stroke-linejoin="round" stroke-linecap="round" fill="none"/></svg>
<svg style="position:absolute;left:431px;top:399.77px;" width="40" height="36" viewBox="0 0 40 36" fill="none"><path d="M1 5 Q1 1 4.5 1 H13.5 Q16 1 16.8 3.5 L17.3 5 H35 Q38 5 38 8 V31.5 Q38 34.5 35 34.5 H4 Q1 34.5 1 31.5 Z" fill="#fde79a" stroke="#e8c462" stroke-width="1.6"/>
<path d="M1.8 6 H37.2 V9.3 H1.8 Z" fill="#fbdb7c"/><path d="M1.5 9.8 H37.5" stroke="#e8c462" stroke-width="1.5"/></svg>
<div class="t" style="left:485.5px;top:403.77px;font-size:20px;line-height:28px;color:#3b404c;font-weight:normal;letter-spacing:0.5px;"><span class="k">마이그레이션</span></div>
<div class="t" style="left:1307px;top:404.77px;font-size:19px;line-height:26px;color:#3b404c;font-weight:normal;">-</div>
<div class="t" style="left:1453.5px;top:404.77px;font-size:19px;line-height:26px;color:#3b404c;font-weight:normal;">2025-10-29 14:46:17</div>
<div style="position:absolute;left:2153.5px;top:398.77px;width:37px;height:37px;box-sizing:border-box;border:2px solid #c2cad6;border-radius:7px;background:#f6f7f3"></div>
<svg style="position:absolute;left:2163px;top:412.17px;" width="16" height="12" viewBox="0 0 16 12" fill="none"><path d="M1.5 1 H14.5 L8 10.5 Z" fill="#9eaabb"/></svg>
<div style="position:absolute;left:369px;top:445.94px;width:1918px;height:58.17px;background:#dfe7f8"></div>
<div style="position:absolute;left:369px;top:445.94px;width:1918px;height:1.5px;background:#e8ebef"></div>
<svg style="position:absolute;left:385px;top:466.14px;" width="26" height="26" viewBox="0 0 26 26" fill="none"><rect x="0.9" y="0.9" width="23.6" height="23.6" stroke="#666" stroke-width="1.6" fill="none"/><path d="M6 14 L10.2 19 L18.6 5.6" stroke="#666" stroke-width="2.9" stroke-linejoin="round" stroke-linecap="round" fill="none"/></svg>
<svg style="position:absolute;left:436px;top:456.44px;" width="30" height="40" viewBox="0 0 30 40" fill="none"><path d="M4 1.5 H17 L27.5 12 V34 Q27.5 37 24.5 37 H4 Q1 37 1 34 V4.5 Q1 1.5 4 1.5 Z" fill="#e9eff8" stroke="#4a90e2" stroke-width="2.2" stroke-linejoin="round"/><path d="M17 2 V9.5 Q17 12 19.5 12 H27 Z" fill="#b8d3f0" stroke="#4a90e2" stroke-width="1.4" stroke-linejoin="round"/><path d="M4.5 7.80 H12.5" stroke="#4a90e2" stroke-width="1.7"/><path d="M4.5 11.65 H12.5" stroke="#4a90e2" stroke-width="1.7"/><path d="M4.5 15.50 H15" stroke="#4a90e2" stroke-width="1.7"/><path d="M4.5 19.35 H23" stroke="#4a90e2" stroke-width="1.7"/><path d="M4.5 23.20 H23" stroke="#4a90e2" stroke-width="1.7"/><path d="M4.5 27.05 H23" stroke="#4a90e2" stroke-width="1.7"/><path d="M4.5 30.90 H15" stroke="#4a90e2" stroke-width="1.7"/></svg>
<div class="t" style="left:485.5px;top:461.94px;font-size:20px;line-height:28px;color:#3b404c;font-weight:normal;letter-spacing:0.5px;">1 (1).docx</div>
<div class="t" style="left:1307px;top:462.94px;font-size:19px;line-height:26px;color:#3b404c;font-weight:normal;">399.77KB</div>
<div class="t" style="left:1453.5px;top:462.94px;font-size:19px;line-height:26px;color:#3b404c;font-weight:normal;">2025-11-06 08:48:44</div>
<div class="t" style="left:1689.5px;top:462.94px;font-size:19px;line-height:26px;color:#9b9b9b;font-weight:normal;">소금강</div>
<div class="t" style="left:1925px;top:462.94px;font-size:19px;line-height:26px;color:#3b404c;font-weight:normal;">docx</div>
<svg style="position:absolute;left:2110px;top:461.94px;" width="34" height="34" viewBox="0 0 34 34" fill="none"><rect x="0" y="0" width="32.8" height="23" rx="4.5" fill="#9eabbd"/><path d="M7 22 V32.5 L16.5 22 Z" fill="#9eabbd"/><path d="M8 8.2 Q8.3 4.9 11.7 4.9 Q15.1 4.9 15.1 8 Q15.1 10 12.6 12.4 L8.1 16.4 H15.6" stroke="#fff" stroke-width="1.9" fill="none"/><path d="M18.6 7.9 L22.6 4.8 V16.6" stroke="#fff" stroke-width="1.9" fill="none"/></svg>
<div style="position:absolute;left:2153.5px;top:456.94px;width:37px;height:37px;box-sizing:border-box;border:2px solid #c2cad6;border-radius:7px;background:#f6f7f3"></div>
<svg style="position:absolute;left:2163px;top:470.34px;" width="16" height="12" viewBox="0 0 16 12" fill="none"><path d="M1.5 1 H14.5 L8 10.5 Z" fill="#9eaabb"/></svg>
<div style="position:absolute;left:369px;top:504.11px;width:1918px;height:1.5px;background:#e8ebef"></div>
<div style="position:absolute;left:385px;top:524.31px;width:25px;height:25px;border:1.5px solid #d2d2d2;box-sizing:border-box;background:#fff"></div>
<svg style="position:absolute;left:436px;top:515.11px;" width="30" height="39" viewBox="0 0 30 39" fill="none"><defs><linearGradient id="thg" x1="0" y1="0" x2="1" y2="0"><stop offset="0" stop-color="#8a4a18"/><stop offset="0.7" stop-color="#b06a28"/><stop offset="1" stop-color="#c8b8a8"/></linearGradient></defs>
<rect x="0" y="0" width="29" height="38" fill="#c07a30"/>
<rect x="0" y="0" width="29" height="8" fill="url(#thg)"/><path d="M3 6 L24 1.5" stroke="#3a2010" stroke-width="2"/>
<rect x="0" y="7" width="29" height="23" fill="#1a1a22"/>
<path d="M1 8.2 H27.5 L26.5 29 H1 Z" fill="none" stroke="#2d55b0" stroke-width="2.4"/>
<rect x="7.3" y="10" width="16.6" height="17.5" fill="#d8dcea"/>
<rect x="2.8" y="11.5" width="2.4" height="3" fill="#4060c0"/>
<path d="M0 30 H29 V38 H0 Z" fill="#c8802a"/><path d="M0 30 H16 L11 33 H0 Z" fill="#4a2a1a"/><ellipse cx="13" cy="31.5" rx="6" ry="2.4" fill="#cfc0b0"/><path d="M14 30 H22 Q20 33 15 33 Z" fill="#7a58a8"/><path d="M0 35 L5 38 H0 Z" fill="#201010"/></svg>
<div class="t" style="left:485.5px;top:520.11px;font-size:20px;line-height:28px;color:#3b404c;font-weight:normal;letter-spacing:0.5px;">2025-11-02 <span class="k">출석</span>(1).jpg</div>
<div class="t" style="left:1307px;top:521.11px;font-size:19px;line-height:26px;color:#3b404c;font-weight:normal;">5.11MB</div>
<div class="t" style="left:1453.5px;top:521.11px;font-size:19px;line-height:26px;color:#3b404c;font-weight:normal;">2025-11-03 08:35:43</div>
<svg style="position:absolute;left:1688px;top:523.61px;" width="22" height="22" viewBox="0 0 22 22" fill="none"><circle cx="10.5" cy="10.5" r="9.6" fill="#5d95dc"/><rect x="9" y="8.5" width="3" height="8" fill="#fff"/><circle cx="10.5" cy="5.5" r="1.8" fill="#fff"/><path d="M7 8.5 H12 M7 16.5 H14" stroke="#fff" stroke-width="1.6"/></svg>
<div class="t" style="left:1716px;top:521.11px;font-size:19px;line-height:26px;color:#9b9b9b;font-weight:normal;">kkso@directcloudl...</div>
<div class="t" style="left:1925px;top:521.11px;font-size:19px;line-height:26px;color:#3b404c;font-weight:normal;">jpg</div>
<div style="position:absolute;left:2153.5px;top:515.11px;width:37px;height:37px;box-sizing:border-box;border:2px solid #c2cad6;border-radius:7px;background:#f6f7f3"></div>
<svg style="position:absolute;left:2163px;top:528.51px;" width="16" height="12" viewBox="0 0 16 12" fill="none"><path d="M1.5 1 H14.5 L8 10.5 Z" fill="#9eaabb"/></svg>
<div style="position:absolute;left:369px;top:562.28px;width:1918px;height:1.5px;background:#e8ebef"></div>
<div style="position:absolute;left:385px;top:582.48px;width:25px;height:25px;border:1.5px solid #d2d2d2;box-sizing:border-box;background:#fff"></div>
<svg style="position:absolute;left:436px;top:573.28px;" width="30" height="40" viewBox="0 0 30 40" fill="none"><path d="M4 1.5 H17 L27.5 12 V34 Q27.5 37 24.5 37 H4 Q1 37 1 34 V4.5 Q1 1.5 4 1.5 Z" fill="#e6f4e6" stroke="#38b048" stroke-width="2.2" stroke-linejoin="round"/><path d="M17 2 V9.5 Q17 12 19.5 12 H27 Z" fill="#8fd08f" stroke="#38b048" stroke-width="1.4" stroke-linejoin="round"/><rect x="5.0" y="9.0" width="5" height="2.6" fill="#38b048"/><rect x="11.7" y="9.0" width="5" height="2.6" fill="#38b048"/><rect x="5.0" y="13.6" width="5" height="2.6" fill="#38b048"/><rect x="11.7" y="13.6" width="5" height="2.6" fill="#38b048"/><rect x="18.4" y="13.6" width="5" height="2.6" fill="#38b048"/><rect x="5.0" y="18.2" width="5" height="2.6" fill="#38b048"/><rect x="11.7" y="18.2" width="5" height="2.6" fill="#38b048"/><rect x="18.4" y="18.2" width="5" height="2.6" fill="#38b048"/><rect x="5.0" y="22.8" width="5" height="2.6" fill="#38b048"/><rect x="11.7" y="22.8" width="5" height="2.6" fill="#38b048"/><rect x="18.4" y="22.8" width="5" height="2.6" fill="#38b048"/><rect x="5.0" y="27.4" width="5" height="2.6" fill="#38b048"/><rect x="11.7" y="27.4" width="5" height="2.6" fill="#38b048"/><rect x="18.4" y="27.4" width="5" height="2.6" fill="#38b048"/><rect x="5.0" y="32.0" width="5" height="2.6" fill="#38b048"/><rect x="11.7" y="32.0" width="5" height="2.6" fill="#38b048"/><rect x="18.4" y="32.0" width="5" height="2.6" fill="#38b048"/></svg>
<div class="t" style="left:485.5px;top:578.28px;font-size:20px;line-height:28px;color:#3b404c;font-weight:normal;letter-spacing:0.5px;"><span class="u">DC</span> <span class="u">LAB</span> <span class="u">CS</span> <span class="k">응대</span> <span class="k">기록</span> <span class="k">문서</span>.xlsx</div>
<div class="t" style="left:1307px;top:579.28px;font-size:19px;line-height:26px;color:#3b404c;font-weight:normal;">11.15KB</div>
<div class="t" style="left:1453.5px;top:579.28px;font-size:19px;line-height:26px;color:#3b404c;font-weight:normal;">2025-10-31 17:15:49</div>
<div class="t" style="left:1689.5px;top:579.28px;font-size:19px;line-height:26px;color:#9b9b9b;font-weight:normal;">홍보팀1</div>
<div class="t" style="left:1925px;top:579.28px;font-size:19px;line-height:26px;color:#3b404c;font-weight:normal;">xlsx</div>
<div style="position:absolute;left:2153.5px;top:573.28px;width:37px;height:37px;box-sizing:border-box;border:2px solid #c2cad6;border-radius:7px;background:#f6f7f3"></div>
<svg style="position:absolute;left:2163px;top:586.68px;" width="16" height="12" viewBox="0 0 16 12" fill="none"><path d="M1.5 1 H14.5 L8 10.5 Z" fill="#9eaabb"/></svg>
<div style="position:absolute;left:369px;top:620.45px;width:1918px;height:1.5px;background:#e8ebef"></div>
<div style="position:absolute;left:385px;top:640.65px;width:25px;height:25px;border:1.5px solid #d2d2d2;box-sizing:border-box;background:#fff"></div>
<svg style="position:absolute;left:436px;top:631.45px;" width="30" height="40" viewBox="0 0 30 40" fill="none"><path d="M4 1.5 H17 L27.5 12 V34 Q27.5 37 24.5 37 H4 Q1 37 1 34 V4.5 Q1 1.5 4 1.5 Z" fill="#f9c9c4" stroke="#f0584a" stroke-width="2.2" stroke-linejoin="round"/><path d="M17 2 V9.5 Q17 12 19.5 12 H27 Z" fill="#f19a92" stroke="#f0584a" stroke-width="1.4" stroke-linejoin="round"/><text x="14.5" y="22.5" text-anchor="middle" font-family="Liberation Sans" font-weight="bold" font-size="10" fill="#ee4a3c">PDF</text><path d="M5 26.0 H24" stroke="#f3a59d" stroke-width="0.9"/><path d="M5 29.3 H24" stroke="#f3a59d" stroke-width="0.9"/><path d="M5 32.6 H24" stroke="#f3a59d" stroke-width="0.9"/></svg>
<div class="t" style="left:485.5px;top:636.45px;font-size:20px;line-height:28px;color:#3b404c;font-weight:normal;letter-spacing:0.5px;"><span class="u">DC</span> <span class="k">마이그레이션</span>_<span class="k">가이드</span>.pdf</div>
<div class="t" style="left:1307px;top:637.45px;font-size:19px;line-height:26px;color:#3b404c;font-weight:normal;">455.07KB</div>
<div class="t" style="left:1453.5px;top:637.45px;font-size:19px;line-height:26px;color:#3b404c;font-weight:normal;">2025-10-28 22:26:02</div>
<div class="t" style="left:1689.5px;top:637.45px;font-size:19px;line-height:26px;color:#9b9b9b;font-weight:normal;">소금강</div>
<div class="t" style="left:1925px;top:637.45px;font-size:19px;line-height:26px;color:#3b404c;font-weight:normal;">pdf</div>
<div style="position:absolute;left:2153.5px;top:631.45px;width:37px;height:37px;box-sizing:border-box;border:2px solid #c2cad6;border-radius:7px;background:#f6f7f3"></div>
<svg style="position:absolute;left:2163px;top:644.85px;" width="16" height="12" viewBox="0 0 16 12" fill="none"><path d="M1.5 1 H14.5 L8 10.5 Z" fill="#9eaabb"/></svg>
<div style="position:absolute;left:369px;top:678.62px;width:1918px;height:1.5px;background:#e8ebef"></div>
<div style="position:absolute;left:385px;top:698.82px;width:25px;height:25px;border:1.5px solid #d2d2d2;box-sizing:border-box;background:#fff"></div>
<svg style="position:absolute;left:436px;top:689.62px;" width="30" height="40" viewBox="0 0 30 40" fill="none"><path d="M4 1.5 H17 L27.5 12 V34 Q27.5 37 24.5 37 H4 Q1 37 1 34 V4.5 Q1 1.5 4 1.5 Z" fill="#f9c9c4" stroke="#f0584a" stroke-width="2.2" stroke-linejoin="round"/><path d="M17 2 V9.5 Q17 12 19.5 12 H27 Z" fill="#f19a92" stroke="#f0584a" stroke-width="1.4" stroke-linejoin="round"/><text x="14.5" y="22.5" text-anchor="middle" font-family="Liberation Sans" font-weight="bold" font-size="10" fill="#ee4a3c">PDF</text><path d="M5 26.0 H24" stroke="#f3a59d" stroke-width="0.9"/><path d="M5 29.3 H24" stroke="#f3a59d" stroke-width="0.9"/><path d="M5 32.6 H24" stroke="#f3a59d" stroke-width="0.9"/></svg>
<div class="t" style="left:485.5px;top:694.62px;font-size:20px;line-height:28px;color:#3b404c;font-weight:normal;letter-spacing:0.5px;">next.pdf</div>
<div class="t" style="left:1307px;top:695.62px;font-size:19px;line-height:26px;color:#3b404c;font-weight:normal;">903.35KB</div>
<div class="t" style="left:1453.5px;top:695.62px;font-size:19px;line-height:26px;color:#3b404c;font-weight:normal;">2025-10-28 22:23:50</div>
<div class="t" style="left:1689.5px;top:695.62px;font-size:19px;line-height:26px;color:#9b9b9b;font-weight:normal;">소금강</div>
<div class="t" style="left:1925px;top:695.62px;font-size:19px;line-height:26px;color:#3b404c;font-weight:normal;">pdf</div>
<div style="position:absolute;left:2153.5px;top:689.62px;width:37px;height:37px;box-sizing:border-box;border:2px solid #c2cad6;border-radius:7px;background:#f6f7f3"></div>
<svg style="position:absolute;left:2163px;top:703.02px;" width="16" height="12" viewBox="0 0 16 12" fill="none"><path d="M1.5 1 H14.5 L8 10.5 Z" fill="#9eaabb"/></svg>
<div style="position:absolute;left:369px;top:736.79px;width:1918px;height:1.5px;background:#e8ebef"></div>
<div style="position:absolute;left:385px;top:756.99px;width:25px;height:25px;border:1.5px solid #d2d2d2;box-sizing:border-box;background:#fff"></div>
<svg style="position:absolute;left:436px;top:747.79px;" width="30" height="40" viewBox="0 0 30 40" fill="none"><path d="M4 1.5 H17 L27.5 12 V34 Q27.5 37 24.5 37 H4 Q1 37 1 34 V4.5 Q1 1.5 4 1.5 Z" fill="#eff1f4" stroke="#b9bfc8" stroke-width="2.2" stroke-linejoin="round"/><path d="M17 2 V9.5 Q17 12 19.5 12 H27 Z" fill="#dde1e6" stroke="#b9bfc8" stroke-width="1.4" stroke-linejoin="round"/></svg>
<div class="t" style="left:485.5px;top:752.79px;font-size:20px;line-height:28px;color:#3b404c;font-weight:normal;letter-spacing:0.5px;">sample_user.csv</div>
<div class="t" style="left:1307px;top:753.79px;font-size:19px;line-height:26px;color:#3b404c;font-weight:normal;">255.00B</div>
<div class="t" style="left:1453.5px;top:753.79px;font-size:19px;line-height:26px;color:#3b404c;font-weight:normal;">2025-10-28 22:26:56</div>
<div class="t" style="left:1689.5px;top:753.79px;font-size:19px;line-height:26px;color:#9b9b9b;font-weight:normal;">소금강</div>
<div class="t" style="left:1925px;top:753.79px;font-size:19px;line-height:26px;color:#3b404c;font-weight:normal;">csv</div>
<div style="position:absolute;left:2153.5px;top:747.79px;width:37px;height:37px;box-sizing:border-box;border:2px solid #c2cad6;border-radius:7px;background:#f6f7f3"></div>
<svg style="position:absolute;left:2163px;top:761.19px;" width="16" height="12" viewBox="0 0 16 12" fill="none"><path d="M1.5 1 H14.5 L8 10.5 Z" fill="#9eaabb"/></svg>
<div style="position:absolute;left:369px;top:794.96px;width:1918px;height:1.5px;background:#e8ebef"></div>
<div style="position:absolute;left:385px;top:815.16px;width:25px;height:25px;border:1.5px solid #d2d2d2;box-sizing:border-box;background:#fff"></div>
<svg style="position:absolute;left:436px;top:805.96px;" width="30" height="40" viewBox="0 0 30 40" fill="none"><path d="M4 1.5 H17 L27.5 12 V34 Q27.5 37 24.5 37 H4 Q1 37 1 34 V4.5 Q1 1.5 4 1.5 Z" fill="#e6f4e6" stroke="#38b048" stroke-width="2.2" stroke-linejoin="round"/><path d="M17 2 V9.5 Q17 12 19.5 12 H27 Z" fill="#8fd08f" stroke="#38b048" stroke-width="1.4" stroke-linejoin="round"/><rect x="5.0" y="9.0" width="5" height="2.6" fill="#38b048"/><rect x="11.7" y="9.0" width="5" height="2.6" fill="#38b048"/><rect x="5.0" y="13.6" width="5" height="2.6" fill="#38b048"/><rect x="11.7" y="13.6" width="5" height="2.6" fill="#38b048"/><rect x="18.4" y="13.6" width="5" height="2.6" fill="#38b048"/><rect x="5.0" y="18.2" width="5" height="2.6" fill="#38b048"/><rect x="11.7" y="18.2" width="5" height="2.6" fill="#38b048"/><rect x="18.4" y="18.2" width="5" height="2.6" fill="#38b048"/><rect x="5.0" y="22.8" width="5" height="2.6" fill="#38b048"/><rect x="11.7" y="22.8" width="5" height="2.6" fill="#38b048"/><rect x="18.4" y="22.8" width="5" height="2.6" fill="#38b048"/><rect x="5.0" y="27.4" width="5" height="2.6" fill="#38b048"/><rect x="11.7" y="27.4" width="5" height="2.6" fill="#38b048"/><rect x="18.4" y="27.4" width="5" height="2.6" fill="#38b048"/><rect x="5.0" y="32.0" width="5" height="2.6" fill="#38b048"/><rect x="11.7" y="32.0" width="5" height="2.6" fill="#38b048"/><rect x="18.4" y="32.0" width="5" height="2.6" fill="#38b048"/></svg>
<div class="t" style="left:485.5px;top:810.96px;font-size:20px;line-height:28px;color:#3b404c;font-weight:normal;letter-spacing:0.5px;">scroll test.xlsx</div>
<div class="t" style="left:1307px;top:811.96px;font-size:19px;line-height:26px;color:#3b404c;font-weight:normal;">7.95KB</div>
<div class="t" style="left:1453.5px;top:811.96px;font-size:19px;line-height:26px;color:#3b404c;font-weight:normal;">2025-10-31 10:27:47</div>
<div class="t" style="left:1689.5px;top:811.96px;font-size:19px;line-height:26px;color:#9b9b9b;font-weight:normal;">홍보팀1</div>
<div class="t" style="left:1925px;top:811.96px;font-size:19px;line-height:26px;color:#3b404c;font-weight:normal;">xlsx</div>
<svg style="position:absolute;left:2110px;top:810.96px;" width="34" height="34" viewBox="0 0 34 34" fill="none"><rect x="0" y="0" width="32.8" height="23" rx="4.5" fill="#9eabbd"/><path d="M7 22 V32.5 L16.5 22 Z" fill="#9eabbd"/><path d="M13 7.9 L17.2 4.6 V16.4" stroke="#fff" stroke-width="2" stroke-linejoin="miter" fill="none"/></svg>
<div style="position:absolute;left:2153.5px;top:805.96px;width:37px;height:37px;box-sizing:border-box;border:2px solid #c2cad6;border-radius:7px;background:#f6f7f3"></div>
<svg style="position:absolute;left:2163px;top:819.36px;" width="16" height="12" viewBox="0 0 16 12" fill="none"><path d="M1.5 1 H14.5 L8 10.5 Z" fill="#9eaabb"/></svg>
<div style="position:absolute;left:369px;top:853.13px;width:1918px;height:1.5px;background:#e8ebef"></div>
<div style="position:absolute;left:385px;top:873.33px;width:25px;height:25px;border:1.5px solid #d2d2d2;box-sizing:border-box;background:#fff"></div>
<svg style="position:absolute;left:436px;top:863.63px;" width="30" height="40" viewBox="0 0 30 40" fill="none"><path d="M4 1.5 H17 L27.5 12 V34 Q27.5 37 24.5 37 H4 Q1 37 1 34 V4.5 Q1 1.5 4 1.5 Z" fill="#e9eff8" stroke="#4a90e2" stroke-width="2.2" stroke-linejoin="round"/><path d="M17 2 V9.5 Q17 12 19.5 12 H27 Z" fill="#b8d3f0" stroke="#4a90e2" stroke-width="1.4" stroke-linejoin="round"/><path d="M4.5 7.80 H12.5" stroke="#4a90e2" stroke-width="1.7"/><path d="M4.5 11.65 H12.5" stroke="#4a90e2" stroke-width="1.7"/><path d="M4.5 15.50 H15" stroke="#4a90e2" stroke-width="1.7"/><path d="M4.5 19.35 H23" stroke="#4a90e2" stroke-width="1.7"/><path d="M4.5 23.20 H23" stroke="#4a90e2" stroke-width="1.7"/><path d="M4.5 27.05 H23" stroke="#4a90e2" stroke-width="1.7"/><path d="M4.5 30.90 H15" stroke="#4a90e2" stroke-width="1.7"/></svg>
<div class="t" style="left:485.5px;top:869.13px;font-size:20px;line-height:28px;color:#3b404c;font-weight:normal;letter-spacing:0.5px;">table <span class="u">I</span>ssue file.docx</div>
<div class="t" style="left:1307px;top:870.13px;font-size:19px;line-height:26px;color:#3b404c;font-weight:normal;">197.89KB</div>
<div class="t" style="left:1453.5px;top:870.13px;font-size:19px;line-height:26px;color:#3b404c;font-weight:normal;">2025-11-02 19:59:03</div>
<div class="t" style="left:1689.5px;top:870.13px;font-size:19px;line-height:26px;color:#9b9b9b;font-weight:normal;">홍보팀1</div>
<div class="t" style="left:1925px;top:870.13px;font-size:19px;line-height:26px;color:#3b404c;font-weight:normal;">docx</div>
<div style="position:absolute;left:2153.5px;top:864.13px;width:37px;height:37px;box-sizing:border-box;border:2px solid #c2cad6;border-radius:7px;background:#f6f7f3"></div>
<svg style="position:absolute;left:2163px;top:877.53px;" width="16" height="12" viewBox="0 0 16 12" fill="none"><path d="M1.5 1 H14.5 L8 10.5 Z" fill="#9eaabb"/></svg>
<div style="position:absolute;left:369px;top:911.3px;width:1918px;height:1.5px;background:#e8ebef"></div>
<div style="position:absolute;left:385px;top:931.5px;width:25px;height:25px;border:1.5px solid #d2d2d2;box-sizing:border-box;background:#fff"></div>
<svg style="position:absolute;left:436px;top:922.3px;" width="30" height="40" viewBox="0 0 30 40" fill="none"><path d="M4 1.5 H17 L27.5 12 V34 Q27.5 37 24.5 37 H4 Q1 37 1 34 V4.5 Q1 1.5 4 1.5 Z" fill="#f9c9c4" stroke="#f0584a" stroke-width="2.2" stroke-linejoin="round"/><path d="M17 2 V9.5 Q17 12 19.5 12 H27 Z" fill="#f19a92" stroke="#f0584a" stroke-width="1.4" stroke-linejoin="round"/><text x="14.5" y="22.5" text-anchor="middle" font-family="Liberation Sans" font-weight="bold" font-size="10" fill="#ee4a3c">PDF</text><path d="M5 26.0 H24" stroke="#f3a59d" stroke-width="0.9"/><path d="M5 29.3 H24" stroke="#f3a59d" stroke-width="0.9"/><path d="M5 32.6 H24" stroke="#f3a59d" stroke-width="0.9"/></svg>
<div class="t" style="left:485.5px;top:927.30px;font-size:20px;line-height:28px;color:#3b404c;font-weight:normal;letter-spacing:0.5px;">test.pdf</div>
<div class="t" style="left:1307px;top:928.30px;font-size:19px;line-height:26px;color:#3b404c;font-weight:normal;">47.05MB</div>
<div class="t" style="left:1453.5px;top:928.30px;font-size:19px;line-height:26px;color:#3b404c;font-weight:normal;">2025-10-28 22:23:56</div>
<div class="t" style="left:1689.5px;top:928.30px;font-size:19px;line-height:26px;color:#9b9b9b;font-weight:normal;">소금강</div>
<div class="t" style="left:1925px;top:928.30px;font-size:19px;line-height:26px;color:#3b404c;font-weight:normal;">pdf</div>
<div style="position:absolute;left:2153.5px;top:922.30px;width:37px;height:37px;box-sizing:border-box;border:2px solid #c2cad6;border-radius:7px;background:#f6f7f3"></div>
<svg style="position:absolute;left:2163px;top:935.7px;" width="16" height="12" viewBox="0 0 16 12" fill="none"><path d="M1.5 1 H14.5 L8 10.5 Z" fill="#9eaabb"/></svg>
<div style="position:absolute;left:369px;top:969.47px;width:1918px;height:1.5px;background:#e8ebef"></div>
<div style="position:absolute;left:385px;top:989.67px;width:25px;height:25px;border:1.5px solid #d2d2d2;box-sizing:border-box;background:#fff"></div>
<svg style="position:absolute;left:436px;top:980.47px;" width="30" height="40" viewBox="0 0 30 40" fill="none"><path d="M4 1.5 H17 L27.5 12 V34 Q27.5 37 24.5 37 H4 Q1 37 1 34 V4.5 Q1 1.5 4 1.5 Z" fill="#fde8e2" stroke="#f06a3c" stroke-width="2.2" stroke-linejoin="round"/><path d="M17 2 V9.5 Q17 12 19.5 12 H27 Z" fill="#f8b8a2" stroke="#f06a3c" stroke-width="1.4" stroke-linejoin="round"/><circle cx="12" cy="15" r="6.5" fill="#f8b5a2"/><path d="M12 8.5 V15 H18.5 A6.5 6.5 0 0 0 12 8.5 Z" fill="#f06a3c"/><path d="M5 25 H24 M5 29 H24 M5 33 H24" stroke="#f06a3c" stroke-width="2"/></svg>
<div class="t" style="left:485.5px;top:985.47px;font-size:20px;line-height:28px;color:#3b404c;font-weight:normal;letter-spacing:0.5px;"><span class="k"><span style="margin-left:-9px">【</span>한국어</span> <span class="k">번역<span style="margin-right:-8px">】</span></span><span class="u">DCM</span>igrator_<span class="u">G</span>uide_ver.17_2024<span class="k">년</span>3<span class="k">월</span>13<span class="k">일갱신</span>.pptx</div>
<div class="t" style="left:1307px;top:986.47px;font-size:19px;line-height:26px;color:#3b404c;font-weight:normal;">1.52MB</div>
<div class="t" style="left:1453.5px;top:986.47px;font-size:19px;line-height:26px;color:#3b404c;font-weight:normal;">2025-10-28 22:27:23</div>
<div class="t" style="left:1689.5px;top:986.47px;font-size:19px;line-height:26px;color:#9b9b9b;font-weight:normal;">소금강</div>
<div class="t" style="left:1925px;top:986.47px;font-size:19px;line-height:26px;color:#3b404c;font-weight:normal;">pptx</div>
<div style="position:absolute;left:2153.5px;top:980.47px;width:37px;height:37px;box-sizing:border-box;border:2px solid #c2cad6;border-radius:7px;background:#f6f7f3"></div>
<svg style="position:absolute;left:2163px;top:993.87px;" width="16" height="12" viewBox="0 0 16 12" fill="none"><path d="M1.5 1 H14.5 L8 10.5 Z" fill="#9eaabb"/></svg>
<div style="position:absolute;left:369px;top:1027.64px;width:1918px;height:1.5px;background:#e8ebef"></div>
<svg style="position:absolute;left:436px;top:1037.64px;" width="40" height="42" viewBox="0 0 40 42" fill="none"><path d="M4 1.5 H19.5 L27.5 9.5 V34 Q27.5 37 24.5 37 H4 Q1 37 1 34 V4.5 Q1 1.5 4 1.5 Z" fill="#eef2f9" stroke="#aecdf0" stroke-width="1.8"/><path d="M19.5 2 V9.5 H27" fill="#d2e3f6" stroke="#aecdf0" stroke-width="1.6"/><path d="M5 8.0 H12" stroke="#a9c9ee" stroke-width="1.6"/><path d="M5 12.2 H12" stroke="#a9c9ee" stroke-width="1.6"/><path d="M5 16.4 H20" stroke="#a9c9ee" stroke-width="1.6"/><path d="M5 20.6 H20" stroke="#a9c9ee" stroke-width="1.6"/><path d="M5 24.8 H20" stroke="#a9c9ee" stroke-width="1.6"/><path d="M5 29.0 H20" stroke="#a9c9ee" stroke-width="1.6"/><rect x="18" y="21" width="20" height="20" rx="1.5" fill="#eef3fa" stroke="#4a8ed8" stroke-width="1.8"/><path d="M21 27 L23.5 21.5 H32.5 L35 27" fill="#fff" stroke="#4a8ed8" stroke-width="1.6"/><path d="M22.5 24.5 H33.5 M21.5 27.5 H34.5" stroke="#4a8ed8" stroke-width="1.4"/><path d="M26 36 Q28 32 30 36 M27 33 L29 38" stroke="#4a8ed8" stroke-width="1"/></svg>
<div class="t" style="left:485.5px;top:1043.64px;font-size:20px;line-height:28px;color:#9ca1a9;font-weight:normal;letter-spacing:0.5px;"><span class="k"><span style="margin-left:-9px">【</span>한국어</span> <span class="k">번역<span style="margin-right:-8px">】</span></span><span class="u">D</span>irect<span class="u">C</span>loud <span class="k">이용시</span> <span class="k">주의사항</span>.docx</div>
<div class="t" style="left:1307px;top:1044.64px;font-size:19px;line-height:26px;color:#9ca1a9;font-weight:normal;">21.67KB</div>
<div class="t" style="left:1453.5px;top:1044.64px;font-size:19px;line-height:26px;color:#9ca1a9;font-weight:normal;">2025-10-16 15:49:52</div>
<div class="t" style="left:1689.5px;top:1044.64px;font-size:19px;line-height:26px;color:#c6c8cc;font-weight:normal;">소관리</div>
<div class="t" style="left:1925px;top:1044.64px;font-size:19px;line-height:26px;color:#9ca1a9;font-weight:normal;">docx</div>
<div style="position:absolute;left:2153.5px;top:1038.64px;width:37px;height:37px;box-sizing:border-box;border:2px solid #c2cad6;border-radius:7px;background:#f6f7f3"></div>
<svg style="position:absolute;left:2163px;top:1052.04px;" width="16" height="12" viewBox="0 0 16 12" fill="none"><path d="M1.5 1 H14.5 L8 10.5 Z" fill="#9eaabb"/></svg>
<div style="position:absolute;left:369px;top:1085.81px;width:1918px;height:1.5px;background:#e8ebef"></div>
<svg style="position:absolute;left:436px;top:1095.81px;" width="40" height="42" viewBox="0 0 40 42" fill="none"><path d="M4 1.5 H19.5 L27.5 9.5 V34 Q27.5 37 24.5 37 H4 Q1 37 1 34 V4.5 Q1 1.5 4 1.5 Z" fill="#eef2f9" stroke="#aecdf0" stroke-width="1.8"/><path d="M19.5 2 V9.5 H27" fill="#d2e3f6" stroke="#aecdf0" stroke-width="1.6"/><path d="M5 8.0 H12" stroke="#a9c9ee" stroke-width="1.6"/><path d="M5 12.2 H12" stroke="#a9c9ee" stroke-width="1.6"/><path d="M5 16.4 H20" stroke="#a9c9ee" stroke-width="1.6"/><path d="M5 20.6 H20" stroke="#a9c9ee" stroke-width="1.6"/><path d="M5 24.8 H20" stroke="#a9c9ee" stroke-width="1.6"/><path d="M5 29.0 H20" stroke="#a9c9ee" stroke-width="1.6"/><rect x="18" y="21" width="20" height="20" rx="1.5" fill="#eef3fa" stroke="#4a8ed8" stroke-width="1.8"/><path d="M21 27 L23.5 21.5 H32.5 L35 27" fill="#fff" stroke="#4a8ed8" stroke-width="1.6"/><path d="M22.5 24.5 H33.5 M21.5 27.5 H34.5" stroke="#4a8ed8" stroke-width="1.4"/><path d="M26 36 Q28 32 30 36 M27 33 L29 38" stroke="#4a8ed8" stroke-width="1"/></svg>
<div class="t" style="left:485.5px;top:1101.81px;font-size:20px;line-height:28px;color:#9ca1a9;font-weight:normal;letter-spacing:0.5px;"><span class="k">문서</span>1.docx</div>
<div class="t" style="left:1307px;top:1102.81px;font-size:19px;line-height:26px;color:#9ca1a9;font-weight:normal;">938.65KB</div>
<div class="t" style="left:1453.5px;top:1102.81px;font-size:19px;line-height:26px;color:#9ca1a9;font-weight:normal;">2025-10-02 09:53:39</div>
<div class="t" style="left:1689.5px;top:1102.81px;font-size:19px;line-height:26px;color:#c6c8cc;font-weight:normal;">소관리</div>
<div class="t" style="left:1925px;top:1102.81px;font-size:19px;line-height:26px;color:#9ca1a9;font-weight:normal;">docx</div>
<div style="position:absolute;left:2153.5px;top:1096.81px;width:37px;height:37px;box-sizing:border-box;border:2px solid #c2cad6;border-radius:7px;background:#f6f7f3"></div>
<svg style="position:absolute;left:2163px;top:1110.21px;" width="16" height="12" viewBox="0 0 16 12" fill="none"><path d="M1.5 1 H14.5 L8 10.5 Z" fill="#9eaabb"/></svg>
<div style="position:absolute;left:369px;top:1143.98px;width:1918px;height:1.5px;background:#e8ebef"></div>
<svg style="position:absolute;left:436px;top:1153.98px;" width="40" height="42" viewBox="0 0 40 42" fill="none"><path d="M4 1.5 H19.5 L27.5 9.5 V34 Q27.5 37 24.5 37 H4 Q1 37 1 34 V4.5 Q1 1.5 4 1.5 Z" fill="#f2f3f5" stroke="#d8dbe0" stroke-width="1.8"/><path d="M19.5 2 V9.5 H27" fill="#e1e4e8" stroke="#d8dbe0" stroke-width="1.6"/><rect x="4" y="4.5" width="15" height="29" fill="#bfe0f8"/><path d="M4 33.5 L9.5 24 L15 33.5 Z" fill="#b9e2b0"/><circle cx="15" cy="22.5" r="2.6" fill="#fbe3a0"/><rect x="18" y="21" width="20" height="20" rx="1.5" fill="#eef3fa" stroke="#4a8ed8" stroke-width="1.8"/><path d="M21 27 L23.5 21.5 H32.5 L35 27" fill="#fff" stroke="#4a8ed8" stroke-width="1.6"/><path d="M22.5 24.5 H33.5 M21.5 27.5 H34.5" stroke="#4a8ed8" stroke-width="1.4"/><path d="M26 36 Q28 32 30 36 M27 33 L29 38" stroke="#4a8ed8" stroke-width="1"/></svg>
<div class="t" style="left:485.5px;top:1159.98px;font-size:20px;line-height:28px;color:#9ca1a9;font-weight:normal;letter-spacing:0.5px;"><span class="k">영수증</span>.jpg</div>
<div class="t" style="left:1307px;top:1160.98px;font-size:19px;line-height:26px;color:#9ca1a9;font-weight:normal;">2.19MB</div>
<div class="t" style="left:1453.5px;top:1160.98px;font-size:19px;line-height:26px;color:#9ca1a9;font-weight:normal;">2025-09-30 13:45:55</div>
<div class="t" style="left:1689.5px;top:1160.98px;font-size:19px;line-height:26px;color:#c6c8cc;font-weight:normal;">소관리</div>
<div class="t" style="left:1925px;top:1160.98px;font-size:19px;line-height:26px;color:#9ca1a9;font-weight:normal;">jpg</div>
<div style="position:absolute;left:2153.5px;top:1154.98px;width:37px;height:37px;box-sizing:border-box;border:2px solid #c2cad6;border-radius:7px;background:#f6f7f3"></div>
<svg style="position:absolute;left:2163px;top:1168.38px;" width="16" height="12" viewBox="0 0 16 12" fill="none"><path d="M1.5 1 H14.5 L8 10.5 Z" fill="#9eaabb"/></svg>
<div style="position:absolute;left:369px;top:1202.15px;width:1918px;height:1.5px;background:#e8ebef"></div>
<svg style="position:absolute;left:430px;top:1217px;" width="45" height="5" viewBox="0 0 45 5" fill="none"><path d="M2 3 L5 5 M6 2.5 H14 M18 2 H23 M25 3.5 H38" stroke="#b0a8a8" stroke-width="1.6"/></svg>
<div style="position:absolute;left:2153.5px;top:1213.15px;width:37px;height:37px;box-sizing:border-box;border:2px solid #c2cad6;border-radius:7px;background:#f6f7f3"></div>
<svg style="position:absolute;left:2163px;top:1226.55px;" width="16" height="12" viewBox="0 0 16 12" fill="none"><path d="M1.5 1 H14.5 L8 10.5 Z" fill="#9eaabb"/></svg>
<div style="position:absolute;left:353px;top:323.2px;width:1951px;height:301px;border:4.8px solid #e31b1b;box-sizing:border-box"></div>
<div style="position:absolute;left:2298px;top:323.2px;width:6px;height:301px;background:#e31b1b"></div>
</body></html>
